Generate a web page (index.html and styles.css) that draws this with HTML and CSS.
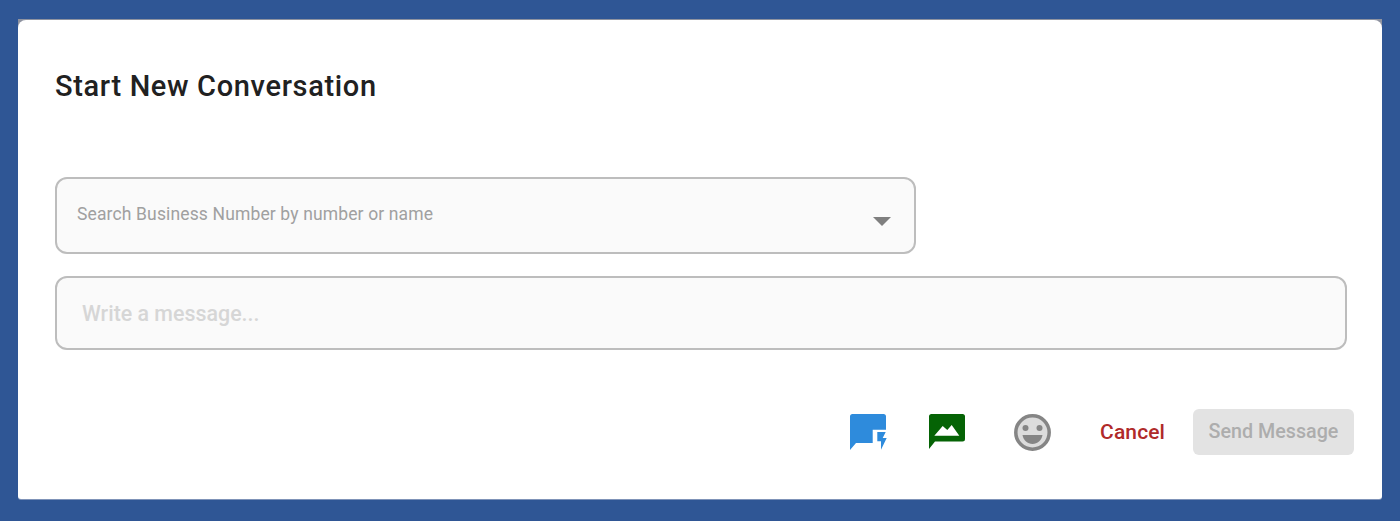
FILE: index.html
```html
<!DOCTYPE html>
<html lang="en">
<head>
<meta charset="utf-8">
<title>Start New Conversation</title>
<link rel="stylesheet" href="styles.css">
</head>
<body>
<div class="backdrop">
  <div class="sheet">
    <section class="dialog">
      <h1 class="title">Start New Conversation</h1>
      <div class="select">
        <span class="select-label">Search Business Number by number or name</span>
        <span class="caret"></span>
      </div>
      <div class="message"><span class="message-label">Write a message...</span></div>
      <div class="actions">
        <svg class="icon icon-quick" viewBox="0 0 37 37" width="37" height="37">
          <path fill="#2e8bdc" d="M2.500 0h31a2.500 2.500 0 0 1 2.500 2.500V15.700H22.700V29H6L0 36V2.500A2.500 2.500 0 0 1 2.500 0z"/>
          <path fill="#2e8bdc" d="M27.300 18h8.400l-3 6h4L31 35.700v-8.400h-3.700z"/>
        </svg>
        <svg class="icon icon-image" viewBox="0 0 37 37" width="37" height="37">
          <path fill="#056305" d="M2.500 0h31a2.500 2.500 0 0 1 2.500 2.500V25a2.500 2.500 0 0 1-2.500 2.500H6L0 35V2.500A2.500 2.500 0 0 1 2.500 0z"/>
          <path fill="#fff" d="M5.300 21.700L13.700 12l4.600 4 4.400-5 7.600 10.700z"/>
        </svg>
        <svg class="icon icon-emoji" viewBox="0 0 37 37" width="37" height="37">
          <circle cx="18.500" cy="18.500" r="16.700" fill="#dcdcdc" stroke="#858585" stroke-width="3.500"/>
          <circle cx="11.500" cy="14" r="3" fill="#858585"/>
          <circle cx="25.500" cy="14" r="3" fill="#858585"/>
          <path fill="#858585" d="M8.500 21h20c-1 5.500-5 9-10 9s-9-3.500-10-9z"/>
        </svg>
        <button class="cancel" type="button">Cancel</button>
        <button class="send" type="button">Send Message</button>
      </div>
    </section>
  </div>
</div>
</body>
</html>
```

FILE: styles.css
```css
* { box-sizing: border-box; }
html, body { margin: 0; height: 100%; }
body {
  background: #2f5695;
  font-family: Roboto, "Liberation Sans", sans-serif;
  overflow: hidden;
}
.backdrop {
  padding: 19px 18px 21px;
  height: 521px;
}
.sheet {
  height: 481px;
  padding: 1px 0;
  background: linear-gradient(#8f93a0 0, #8f93a0 12px, #7f93b8 12px);
  border-radius: 0 0 3px 3px;
}
.dialog {
  height: 479px;
  background: #fff;
  border-radius: 8px 8px 3px 3px;
  padding: 49px 36px 0 37px;
  display: flex;
  flex-direction: column;
}
.title {
  margin: 0;
  font-size: 29px;
  font-weight: 500;
  line-height: 34px;
  letter-spacing: 0.66px;
  color: #212121;
}
.select {
  margin-top: 74px;
  width: 861px;
  height: 77px;
  background: #fafafa;
  border: 2px solid #bdbdbd;
  border-radius: 12px;
  padding: 25px 23px 0 20px;
  display: flex;
  justify-content: space-between;
}
.select-label {
  font-size: 17.500px;
  line-height: 20px;
  letter-spacing: 0.140px;
  color: #a0a0a0;
}
.caret {
  margin-top: 13px;
  width: 0;
  height: 0;
  border-left: 9.500px solid transparent;
  border-right: 9.500px solid transparent;
  border-top: 9px solid #7f7f7f;
}
.message {
  margin-top: 22px;
  height: 74px;
  width: 1292px;
  background: #fafafa;
  border: 2px solid #bdbdbd;
  border-radius: 12px;
  padding: 1px 25px 0;
  display: flex;
  align-items: center;
}
.message-label {
  font-size: 21.400px;
  font-weight: 500;
  color: #d6d6d6;
}
.actions {
  margin-top: 59px;
  margin-right: -8px;
  display: flex;
  align-items: flex-start;
  justify-content: flex-end;
  height: 46px;
}
.icon { display: block; flex: none; margin-top: 5px; }
.icon-image { margin-left: 42px; }
.icon-emoji { margin-left: 48px; }
.cancel {
  margin-left: 49px;
  height: 46px;
  padding: 0 0 1px;
  border: 0;
  background: none;
  font: 500 21px Roboto, sans-serif;
  letter-spacing: 0.100px;
  color: #b02a2a;
}
.send {
  margin-left: 28px;
  width: 161px;
  height: 46px;
  padding: 0 0 1px;
  border: 0;
  border-radius: 6px;
  background: #e3e3e3;
  font: 500 19.700px Roboto, sans-serif;
  color: #adadad;
}
```
